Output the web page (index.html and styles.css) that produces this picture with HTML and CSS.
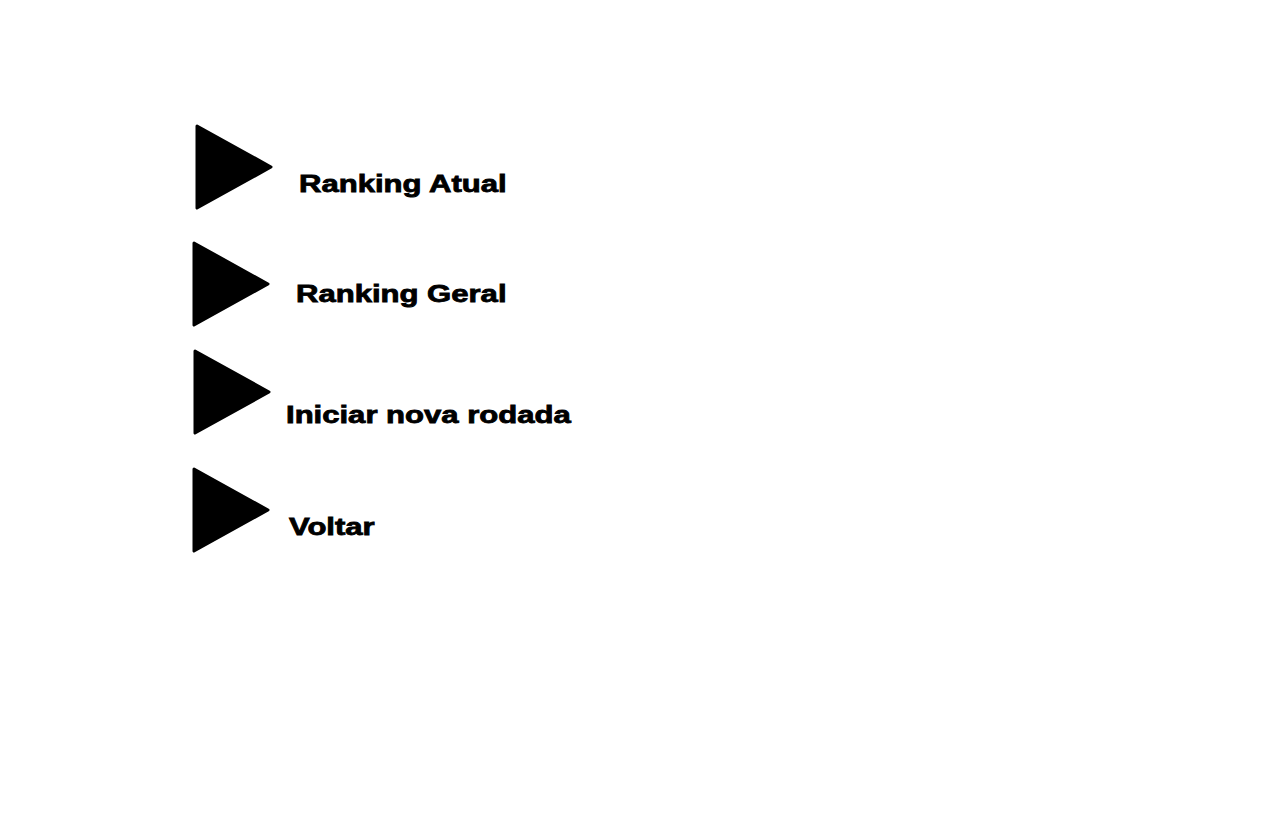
FILE: index.html
```html
<!DOCTYPE html>
<html lang="pt-BR">
<head>
    <meta charset="UTF-8">
    <meta name="viewport" content="width=device-width, initial-scale=1.0">
    <title>Menu</title>
    <link rel="stylesheet" href="styles.css">
</head>
<body>

<div class="menu">
    <a href="#" class="item item-atual">
        <svg class="seta" width="78" height="86" viewBox="0 0 78 86"><polygon points="2,2 76,43 2,84"/></svg>
        <span class="texto">Ranking Atual</span>
    </a>
    <a href="#" class="item item-geral">
        <svg class="seta" width="78" height="86" viewBox="0 0 78 86"><polygon points="2,2 76,43 2,84"/></svg>
        <span class="texto">Ranking Geral</span>
    </a>
    <a href="#" class="item item-rodada">
        <svg class="seta" width="78" height="86" viewBox="0 0 78 86"><polygon points="2,2 76,43 2,84"/></svg>
        <span class="texto">Iniciar nova rodada</span>
    </a>
    <a href="#" class="item item-voltar">
        <svg class="seta" width="78" height="86" viewBox="0 0 78 86"><polygon points="2,2 76,43 2,84"/></svg>
        <span class="texto">Voltar</span>
    </a>
</div>

</body>
</html>
```

FILE: styles.css
```css
body {
    font-family: "Liberation Sans", Arial, sans-serif;
    background-color: #fff;
    margin: 0;
    padding: 0;
}

.menu {
    display: flex;
    flex-direction: column;
    align-items: flex-start;
    padding: 124px 0 0 192px;
}

.item {
    display: flex;
    align-items: flex-start;
    color: #000;
    text-decoration: none;
}

.seta {
    display: block;
}

.seta polygon {
    fill: #000;
    stroke: #000;
    stroke-width: 3;
    stroke-linejoin: round;
}

.texto {
    font-size: 23px;
    font-weight: bold;
    line-height: 1;
    white-space: nowrap;
    -webkit-text-stroke: 0.8px #000;
    transform: scaleX(1.35);
    transform-origin: left center;
}

.item-atual {
    margin-left: 3px;
}

.item-atual .texto {
    margin: 49px 0 0 26px;
}

.item-geral {
    margin-top: 31px;
}

.item-geral .texto {
    margin: 42px 0 0 26px;
}

.item-rodada {
    margin: 22px 0 0 1px;
}

.item-rodada .texto {
    margin: 55px 0 0 15px;
}

.item-voltar {
    margin-top: 32px;
}

.item-voltar .texto {
    margin: 49px 0 0 19px;
}
```
